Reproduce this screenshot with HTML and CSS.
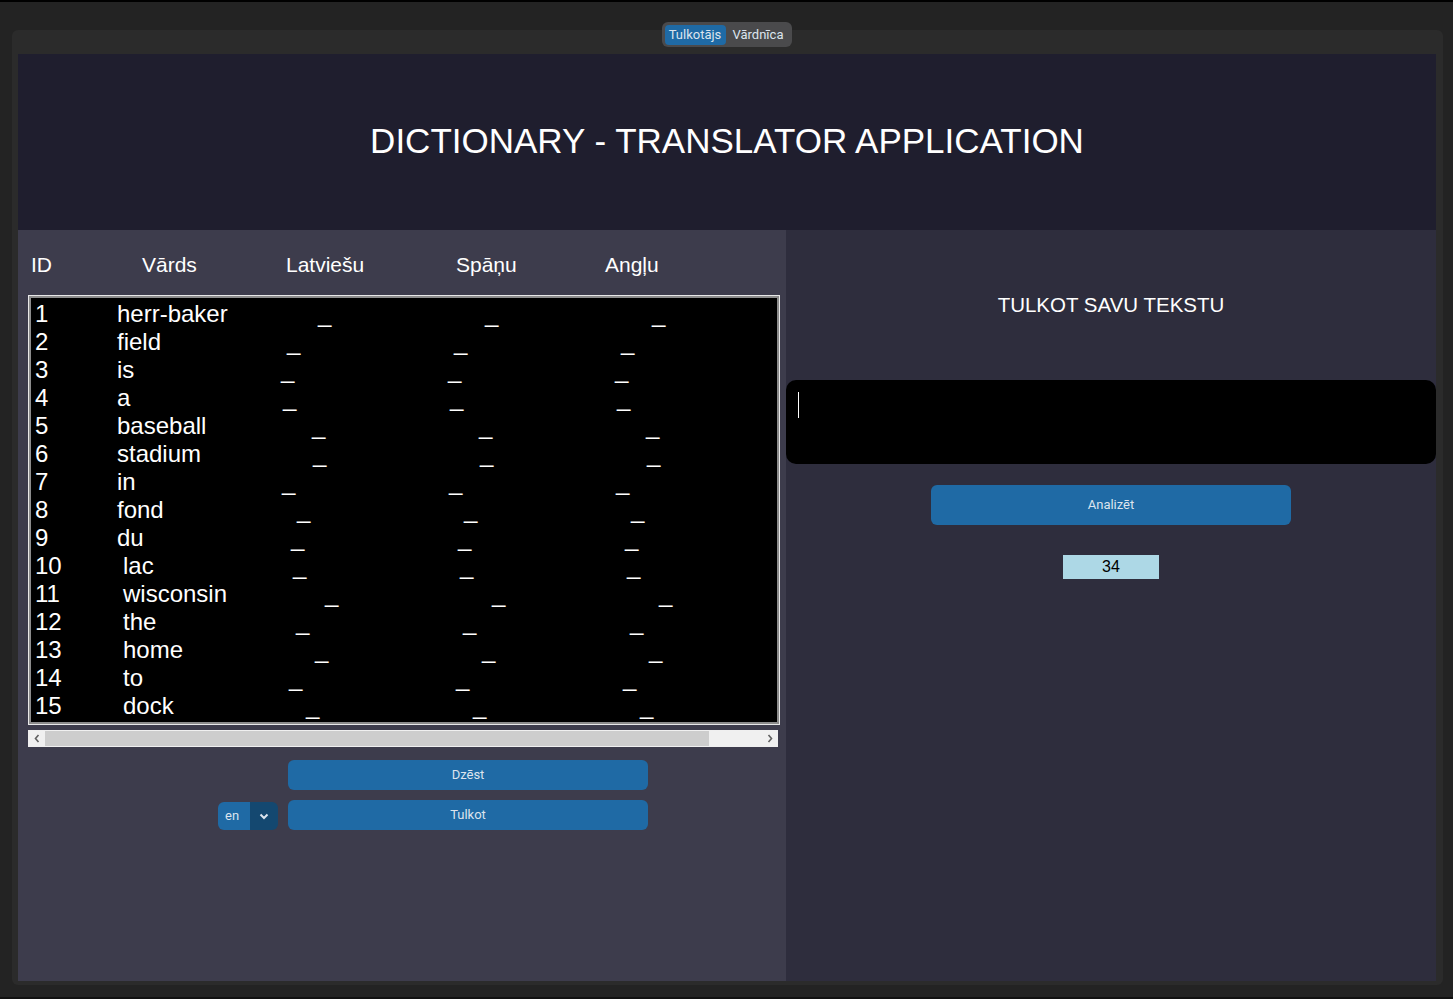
FILE: index.html
```html
<!DOCTYPE html>
<html lang="lv">
<head>
<meta charset="utf-8">
<title>Dictionary - Translator</title>
<link rel="stylesheet" href="styles.css">
</head>
<body>
<div class="screen">
  <div class="tabs">
    <div class="seg">
      <span class="seg-btn active">Tulkotājs</span>
      <span class="seg-btn">Vārdnīca</span>
    </div>
  </div>
  <div class="frame">
    <header class="hero"><h1>DICTIONARY - TRANSLATOR APPLICATION</h1></header>
    <div class="body">
      <section class="left">
        <div class="cols">
          <span>ID</span><span>Vārds</span><span>Latviešu</span><span>Spāņu</span><span>Angļu</span>
        </div>
        <div class="listbox">
          <div class="row"><span class="lead" style="width:285px"><span class="id">1</span>herr-baker</span><span class="u">_</span><span class="u">_</span><span class="u">_</span></div>
          <div class="row"><span class="lead" style="width:254px"><span class="id">2</span>field</span><span class="u">_</span><span class="u">_</span><span class="u">_</span></div>
          <div class="row"><span class="lead" style="width:248px"><span class="id">3</span>is</span><span class="u">_</span><span class="u">_</span><span class="u">_</span></div>
          <div class="row"><span class="lead" style="width:250px"><span class="id">4</span>a</span><span class="u">_</span><span class="u">_</span><span class="u">_</span></div>
          <div class="row"><span class="lead" style="width:279px"><span class="id">5</span>baseball</span><span class="u">_</span><span class="u">_</span><span class="u">_</span></div>
          <div class="row"><span class="lead" style="width:280px"><span class="id">6</span>stadium</span><span class="u">_</span><span class="u">_</span><span class="u">_</span></div>
          <div class="row"><span class="lead" style="width:249px"><span class="id">7</span>in</span><span class="u">_</span><span class="u">_</span><span class="u">_</span></div>
          <div class="row"><span class="lead" style="width:264px"><span class="id">8</span>fond</span><span class="u">_</span><span class="u">_</span><span class="u">_</span></div>
          <div class="row"><span class="lead" style="width:258px"><span class="id">9</span>du</span><span class="u">_</span><span class="u">_</span><span class="u">_</span></div>
          <div class="row"><span class="lead" style="width:260px"><span class="id wide">10</span>lac</span><span class="u">_</span><span class="u">_</span><span class="u">_</span></div>
          <div class="row"><span class="lead" style="width:292px"><span class="id wide">11</span>wisconsin</span><span class="u">_</span><span class="u">_</span><span class="u">_</span></div>
          <div class="row"><span class="lead" style="width:263px"><span class="id wide">12</span>the</span><span class="u">_</span><span class="u">_</span><span class="u">_</span></div>
          <div class="row"><span class="lead" style="width:282px"><span class="id wide">13</span>home</span><span class="u">_</span><span class="u">_</span><span class="u">_</span></div>
          <div class="row"><span class="lead" style="width:256px"><span class="id wide">14</span>to</span><span class="u">_</span><span class="u">_</span><span class="u">_</span></div>
          <div class="row"><span class="lead" style="width:273px"><span class="id wide">15</span>dock</span><span class="u">_</span><span class="u">_</span><span class="u">_</span></div>
        </div>
        <div class="hscroll">
          <span class="sb-btn"><svg width="8" height="9" viewBox="0 0 8 9"><path d="M5.5 1 L2.5 4.5 L5.5 8" fill="none" stroke="#606060" stroke-width="1.6"/></svg></span>
          <span class="sb-thumb"></span>
          <span class="sb-track"></span>
          <span class="sb-btn"><svg width="8" height="9" viewBox="0 0 8 9"><path d="M2.5 1 L5.5 4.5 L2.5 8" fill="none" stroke="#606060" stroke-width="1.6"/></svg></span>
        </div>
        <div class="controls">
          <span class="spacer"></span>
          <button class="btn">Dzēst</button>
          <div class="dropdown">
            <span class="dd-val">en</span>
            <span class="dd-arrow"><svg width="10" height="7" viewBox="0 0 10 7"><path d="M1.5 1.5 L5 5 L8.5 1.5" fill="none" stroke="#dce4ee" stroke-width="2"/></svg></span>
          </div>
          <button class="btn">Tulkot</button>
        </div>
      </section>
      <section class="right">
        <h2>TULKOT SAVU TEKSTU</h2>
        <div class="textbox"><span class="caret"></span></div>
        <button class="btn btn-wide">Analizēt</button>
        <div class="count">34</div>
      </section>
    </div>
  </div>
</div>
</body>
</html>
```

FILE: styles.css
```css
* { box-sizing: border-box; }
html, body { margin: 0; padding: 0; }
body {
  background: #232323;
  font-family: "Liberation Sans", Arial, sans-serif;
  color: #ffffff;
}
.screen {
  width: 1453px;
  height: 999px;
  overflow: hidden;
  border-top: 2px solid #000;
  border-bottom: 2px solid #111;
  background: #232323;
}
.tabs {
  display: flex;
  justify-content: center;
  padding-top: 20px;
  margin-bottom: -17px;
  position: relative;
  z-index: 2;
}
.seg {
  display: flex;
  gap: 2px;
  padding: 3px 3px 2px 3px;
  background: #4a4a4c;
  border-radius: 6px;
  font-family: Roboto, "Liberation Sans", sans-serif;
  font-size: 13px;
}
.seg-btn {
  width: 61px;
  height: 20px;
  line-height: 20px;
  text-align: center;
  color: #dce4ee;
  border-radius: 4px;
}
.seg-btn.active { background: #1f6aa5; }

.frame {
  margin-left: 12px;
  width: 1431px;
  height: 955px;
  background: #2b2b2b;
  border-radius: 6px;
  padding: 24px 7px 4px 6px;
  display: flex;
  flex-direction: column;
}
.hero {
  height: 176px;
  background: #1f1e2e;
  display: flex;
  align-items: center;
  justify-content: center;
}
.hero h1 {
  margin: 0;
  font-weight: normal;
  font-size: 35px;
  line-height: 40px;
  color: #ffffff;
  padding-bottom: 2px;
}
.body {
  flex: 1;
  display: flex;
}
.left {
  width: 768px;
  background: #3d3c4c;
  padding: 23px 0 0 10px;
}
.cols {
  display: grid;
  grid-template-columns: 111px 144px 170px 149px auto;
  padding-left: 3px;
  font-size: 21px;
  line-height: 24px;
  height: 24px;
  margin-bottom: 18px;
}
.listbox {
  width: 752px;
  height: 430px;
  background: #000;
  border: 1px solid #e8e8e8;
  box-shadow: inset 0 0 0 2px #8c8c8c;
  padding: 4px 0 0 4px;
  font-size: 24px;
  overflow: hidden;
}
.row {
  display: flex;
  height: 28px;
  line-height: 28px;
  white-space: pre;
}
.lead { display: flex; flex: none; padding-left: 2px; }
.id { width: 82px; flex: none; }
.id.wide { width: 88px; }
.u { width: 167px; flex: none; }

.hscroll {
  margin-top: 5px;
  width: 750px;
  height: 17px;
  display: flex;
  background: #f0f0f0;
}
.sb-btn {
  width: 17px;
  height: 17px;
  display: flex;
  align-items: center;
  justify-content: center;
  background: #f0f0f0;
  flex: none;
}
.sb-thumb {
  width: 664px;
  height: 15px;
  margin-top: 1px;
  background: #cdcdcd;
  flex: none;
}
.sb-track { flex: 1; }

.controls {
  margin-top: 13px;
  padding-left: 190px;
  display: grid;
  grid-template-columns: 60px 360px;
  column-gap: 10px;
  row-gap: 10px;
  align-items: center;
}
.btn {
  display: block;
  height: 30px;
  border: none;
  border-radius: 6px;
  background: #1f6aa5;
  color: #dce4ee;
  font-family: Roboto, "Liberation Sans", sans-serif;
  font-size: 13px;
  padding: 0 0 2px 0;
  margin: 0;
}
.dropdown {
  display: flex;
  height: 28px;
  border-radius: 6px;
  overflow: hidden;
  margin-top: 2px;
  font-family: Roboto, "Liberation Sans", sans-serif;
  font-size: 13px;
  color: #dce4ee;
}
.dd-val {
  width: 32px;
  background: #1f6aa5;
  line-height: 28px;
  padding-left: 7px;
}
.dd-arrow {
  width: 28px;
  background: #144870;
  display: flex;
  align-items: center;
  justify-content: center;
  padding-top: 1px;
}

.right {
  flex: 1;
  background: #2e2d3d;
  display: flex;
  flex-direction: column;
  align-items: center;
  padding-top: 63px;
}
.right h2 {
  margin: 0;
  font-weight: normal;
  font-size: 20.5px;
  line-height: 24px;
  height: 24px;
  color: #fff;
}
.textbox {
  margin-top: 63px;
  width: 100%;
  height: 84px;
  background: #000;
  border-radius: 10px;
  padding: 12px 0 0 12px;
}
.caret {
  display: block;
  width: 1px;
  height: 26px;
  background: #fff;
}
.btn-wide {
  margin-top: 21px;
  width: 360px;
  height: 40px;
}
.count {
  margin-top: 30px;
  width: 96px;
  height: 24px;
  line-height: 24px;
  background: #add8e6;
  color: #000;
  text-align: center;
  font-size: 16px;
}
```
